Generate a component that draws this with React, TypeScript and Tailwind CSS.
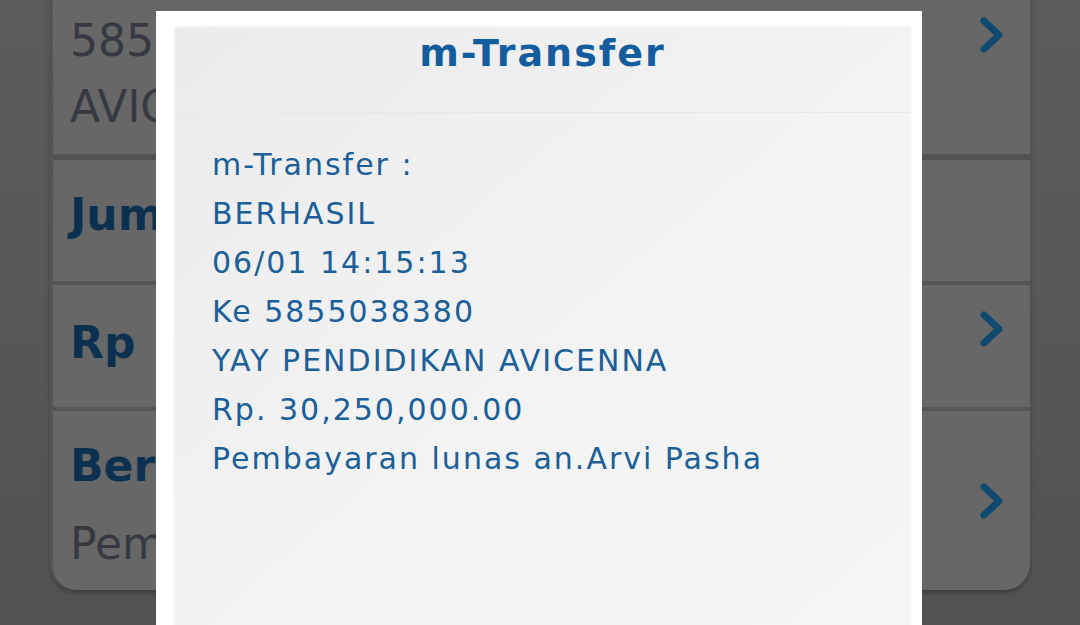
import React from "react";

const Chevron = () => (
  <svg width="26" height="38" viewBox="0 0 26 38" fill="none">
    <path d="M5 5 L20 19 L5 33" stroke="#0f4a6e" strokeWidth="7" strokeLinecap="round" strokeLinejoin="round" />
  </svg>
);

const lines = [
  "m-Transfer :",
  "BERHASIL",
  "06/01 14:15:13",
  "Ke 5855038380",
  "YAY PENDIDIKAN AVICENNA",
  "Rp. 30,250,000.00",
  "Pembayaran lunas an.Arvi Pasha",
];

const App = () => {
  return (
    <div
      className="relative w-[1080px] h-[625px] overflow-hidden bg-gradient-to-b from-[#5c5c5c] to-[#525252]"
      style={{ fontFamily: '"DejaVu Sans", "Noto Sans", sans-serif' }}
    >
      {/* background form card, mostly hidden by the dialog */}
      <div className="ml-[50px] mt-[-30px] w-[980px] h-[620px] rounded-b-[26px] bg-[#676767] border-l-[3px] border-[#555] flex flex-col overflow-hidden shadow-[0_3px_4px_rgba(0,0,0,0.25)]">
        <div className="h-[184px] flex items-start justify-between pl-[17px] pr-[25px] pt-[38px]">
          <div className="text-[44px] leading-[66px] text-[#363a40]">
            <div>5855038380</div>
            <div>AVICENNA</div>
          </div>
          <div className="pt-[8px]"><Chevron /></div>
        </div>
        <div className="h-[6px] bg-[#525252]" />
        <div className="h-[121px] flex items-center pl-[17px]">
          <div className="text-[44px] font-bold text-[#0c3150] -mt-[12px]">Jumlah</div>
        </div>
        <div className="h-[4px] bg-[#555]" />
        <div className="h-[122px] flex items-center justify-between pl-[17px] pr-[25px]">
          <div className="text-[44px] font-bold text-[#0c3150] -mt-[6px]">Rp</div>
          <div className="-mt-[34px]"><Chevron /></div>
        </div>
        <div className="h-[4px] bg-[#555]" />
        <div className="flex-1 flex items-center justify-between pl-[17px] pr-[25px]">
          <div className="leading-[78px] mt-[8px]">
            <div className="text-[44px] font-bold text-[#0c3150]">Berita</div>
            <div className="text-[44px] text-[#363a40]">Pembayaran</div>
          </div>
          <Chevron />
        </div>
      </div>

      {/* dialog */}
      <div className="absolute left-[156px] top-[11px] w-[766px] h-[640px] bg-white pl-[19px] pr-[12px] pt-[16px]">
        <div className="h-full bg-gradient-to-br from-[#ebebeb] via-[#f3f3f3] to-[#f6f6f6] shadow-[0_0_4px_rgba(0,0,0,0.08)]">
          <div className="h-[86px] border-b border-[#e8e8e8] flex justify-center pt-[4px]">
            <div className="text-[38px] font-bold tracking-[2px] text-[#135c9e] leading-[44px]">m-Transfer</div>
          </div>
          <div className="pl-[37px] pt-[27px] text-[#1b5e98] text-[30px] tracking-[2px] leading-[49px]">
            {lines.map((l) => (
              <div key={l}>{l}</div>
            ))}
          </div>
        </div>
      </div>
    </div>
  );
};

export default App;
